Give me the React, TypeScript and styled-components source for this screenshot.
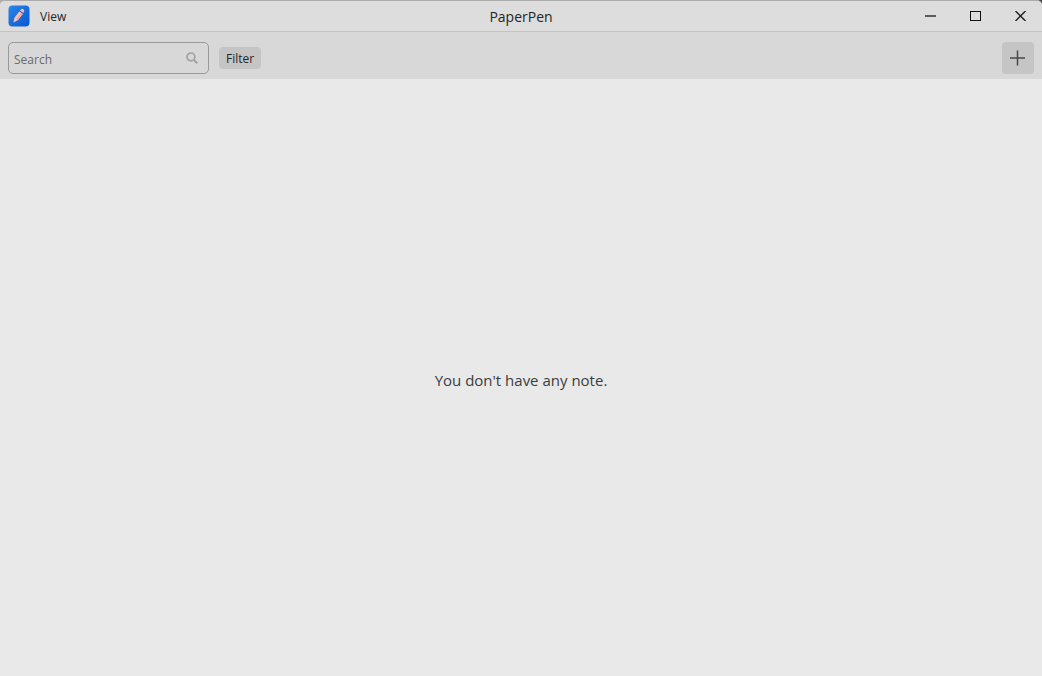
import React from "react";
import styled, { createGlobalStyle } from "styled-components";

const GlobalStyle = createGlobalStyle`
  * { box-sizing: border-box; }
  body {
    margin: 0;
    background: linear-gradient(to right, #b0b0b0, #484848);
    color: #252525;
    font-family: "Segoe UI", "Open Sans", "Noto Sans", sans-serif;
    font-size: 12px;
  }
  button, input { font: inherit; color: inherit; }
`;

const Window = styled.div`
  display: flex;
  flex-direction: column;
  min-height: 100vh;
  background: #e9e9e9;
  border-top: 1px solid #ababab;
  border-radius: 5px 5px 0 0;
`;

const TitleBar = styled.header`
  display: grid;
  grid-template-columns: 1fr auto 1fr;
  align-items: center;
  height: 31px;
  background: #dddddd;
  border-bottom: 1px solid #c3c3c3;
  border-radius: 5px 5px 0 0;
`;

const MenuArea = styled.div`
  display: flex;
  align-items: center;
  gap: 4px;
  padding-left: 8px;
`;

const MenuButton = styled.button`
  padding: 2px 6px 0;
  border: 0;
  background: transparent;
  line-height: 20px;
`;

const Title = styled.h1`
  margin: 0;
  padding-top: 2px;
  font-size: 14px;
  font-weight: 400;
  line-height: 20px;
`;

const WindowControls = styled.div`
  display: flex;
  justify-content: flex-end;
  align-self: stretch;
`;

const ControlButton = styled.button`
  display: grid;
  place-items: center;
  width: 45px;
  padding: 0;
  border: 0;
  background: transparent;
`;

const Toolbar = styled.div`
  display: flex;
  align-items: center;
  gap: 10px;
  height: 47px;
  padding: 5px 8px 0;
  background: #d8d8d8;
`;

const SearchBox = styled.label`
  display: flex;
  align-items: center;
  width: 201px;
  height: 32px;
  padding: 0 10px 0 5px;
  border: 1px solid #999999;
  border-radius: 5px;
`;

const SearchInput = styled.input`
  flex: 1;
  min-width: 0;
  padding: 2px 0 0;
  border: 0;
  outline: 0;
  background: transparent;
  &::placeholder { color: #6b6b6b; opacity: 1; }
`;

const FilterButton = styled.button`
  height: 22px;
  padding: 2px 7px 0;
  border: 0;
  border-radius: 4px;
  background: #c5c5c5;
  line-height: 20px;
`;

const AddButton = styled.button`
  display: grid;
  place-items: center;
  width: 32px;
  height: 32px;
  margin-left: auto;
  padding: 0;
  border: 0;
  border-radius: 4px;
  background: #c5c5c5;
`;

const Notes = styled.main`
  flex: 1;
  display: grid;
  place-items: center;
`;

const EmptyMessage = styled.p`
  margin: 0;
  padding-top: 4px;
  font-size: 15px;
  line-height: 20px;
  color: #3c3c3c;
`;

const Logo = () => (
  <svg width="22" height="22" viewBox="0 0 22 22" aria-hidden="true">
    <defs>
      <linearGradient id="logo-fill" x1="0" y1="0" x2="1" y2="1">
        <stop offset="0" stopColor="#2b86e8" />
        <stop offset="1" stopColor="#0757cf" />
      </linearGradient>
    </defs>
    <rect x="0.5" y="0.5" width="21" height="21" rx="4" fill="url(#logo-fill)" />
    <path d="M5.4 17.6 6.4 12.8 11.4 6.2 14.8 8.7 9.8 15.2Z" fill="#f9c0b4" />
    <path d="M9.8 15.2 14.8 8.7 13.4 7.7 8 14.2Z" fill="#f5a8a0" />
    <path d="M12 5.4 13 4.2Q13.8 3.2 15 4L15.8 4.7Q16.7 5.5 16 6.6L15.3 7.9Z" fill="#f5b9b4" />
    <path d="M11.5 6 15 8.5" stroke="#4767b5" strokeWidth="0.8" />
  </svg>
);

export default function App() {
  return (
    <>
      <GlobalStyle />
      <Window>
        <TitleBar>
          <MenuArea>
            <Logo />
            <MenuButton type="button">View</MenuButton>
          </MenuArea>
          <Title>PaperPen</Title>
          <WindowControls>
            <ControlButton type="button" aria-label="Minimize">
              <svg width="13" height="12" viewBox="0 0 13 12">
                <path d="M2 6H13" stroke="#5c5c5c" strokeWidth="2" />
              </svg>
            </ControlButton>
            <ControlButton type="button" aria-label="Maximize">
              <svg width="13" height="10" viewBox="0 0 13 10">
                <rect x="2.5" y="0.5" width="10" height="9" fill="none" stroke="#111" />
              </svg>
            </ControlButton>
            <ControlButton type="button" aria-label="Close">
              <svg width="13" height="10" viewBox="0 0 13 10">
                <path d="M2.5 0 12.5 10M12.5 0 2.5 10" stroke="#222" strokeWidth="1.4" />
              </svg>
            </ControlButton>
          </WindowControls>
        </TitleBar>
        <Toolbar>
          <SearchBox>
            <SearchInput type="text" placeholder="Search" aria-label="Search" />
            <svg width="12" height="12" viewBox="0 0 12 12" fill="none" stroke="#a2a2a2" aria-hidden="true">
              <circle cx="4.9" cy="4.9" r="3.9" strokeWidth="1.7" />
              <path d="M7.8 7.8 11.3 11.3" strokeWidth="2" />
            </svg>
          </SearchBox>
          <FilterButton type="button">Filter</FilterButton>
          <AddButton type="button" aria-label="Add note">
            <svg width="16" height="16" viewBox="0 0 16 16" stroke="#484848" fill="none">
              <path d="M0 8H15M7.5 0.5V15.5" strokeWidth="1.5" />
            </svg>
          </AddButton>
        </Toolbar>
        <Notes>
          <EmptyMessage>You don't have any note.</EmptyMessage>
        </Notes>
      </Window>
    </>
  );
}
